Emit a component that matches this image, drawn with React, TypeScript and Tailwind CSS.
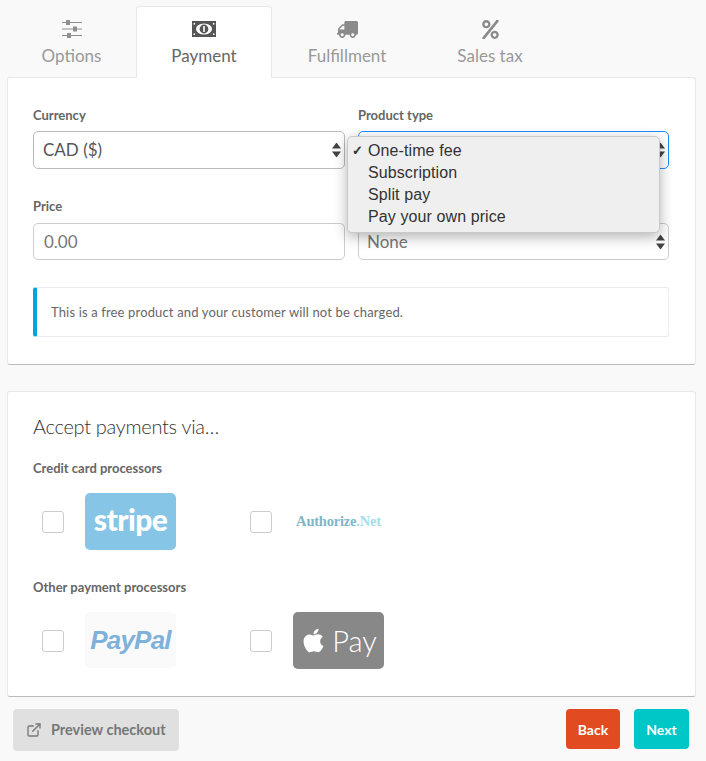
import { FaApple, FaPercent, FaTruck } from "react-icons/fa";
import { FiExternalLink } from "react-icons/fi";

const lato = "font-['Lato','Open_Sans',sans-serif]";

function SlidersIcon() {
  return (
    <svg width="20" height="18" viewBox="0 0 20 18" fill="#8f8f8f">
      <rect x="0" y="2" width="20" height="1" />
      <rect x="4" y="0" width="4" height="5" rx="0.5" />
      <rect x="0" y="8.5" width="20" height="1" />
      <rect x="11" y="6.5" width="4" height="5" rx="0.5" />
      <rect x="0" y="15" width="20" height="1" />
      <rect x="5" y="13" width="4" height="5" rx="0.5" />
    </svg>
  );
}

function BillIcon() {
  return (
    <svg width="24" height="16" viewBox="0 0 24 16">
      <rect width="24" height="16" fill="#555" />
      <ellipse cx="12" cy="8" rx="8" ry="5.6" fill="#fff" />
      <circle cx="12" cy="8" r="4.4" fill="#555" />
      <rect x="11.2" y="5" width="1.6" height="6" fill="#fff" />
      <rect x="1.5" y="2" width="1.6" height="1.6" fill="#fff" />
      <rect x="1.5" y="12.4" width="1.6" height="1.6" fill="#fff" />
      <rect x="20.9" y="2" width="1.6" height="1.6" fill="#fff" />
      <rect x="20.9" y="12.4" width="1.6" height="1.6" fill="#fff" />
    </svg>
  );
}

function SelectArrows() {
  return (
    <svg width="9" height="15" viewBox="0 0 9 15" fill="#444" className="absolute right-[3px] top-1/2 -translate-y-1/2">
      <path d="M4.5 0 L9 6 L0 6 Z" />
      <path d="M4.5 15 L9 9 L0 9 Z" />
    </svg>
  );
}

function Tab({ label, icon, width, active }: { label: string; icon: React.ReactNode; width: string; active?: boolean }) {
  return (
    <div
      className={`flex flex-col items-center ${width} ${
        active
          ? "relative z-10 h-[72px] rounded-t-[4px] border border-b-0 border-[#e8e8e8] bg-white text-[#666]"
          : "h-[71px] text-[#999]"
      }`}
    >
      <div className={`flex h-[20px] items-center ${active ? "mt-[12px]" : "mt-[13px]"}`}>{icon}</div>
      <span className="mt-[5px] text-[17px] leading-[24px]">{label}</span>
    </div>
  );
}

function Field({ label, width, children }: { label: string; width: string; children: React.ReactNode }) {
  return (
    <div className={width}>
      <div className="h-[16px] text-[13px] font-bold leading-[16px] text-[#666]">{label}</div>
      {children}
    </div>
  );
}

function Processor({ children, width }: { children: React.ReactNode; width: string }) {
  return (
    <div className={`flex items-center ${width}`}>
      <div className="ml-[9px] mr-[21px] h-[22px] w-[22px] rounded-[3px] border border-[#ccc] bg-white" />
      {children}
    </div>
  );
}

export default function App() {
  return (
    <div className={`${lato} relative h-[761px] w-[706px] overflow-hidden bg-[#f9f9f9]`}>
      <div className="ml-[7px] flex pt-[6px]">
        <Tab label="Options" width="w-[129px]" icon={<SlidersIcon />} />
        <Tab label="Payment" width="w-[136px]" active icon={<BillIcon />} />
        <Tab label="Fulfillment" width="w-[150px]" icon={<FaTruck size={21} color="#8a8a8a" className="-scale-x-100" />} />
        <Tab label="Sales tax" width="w-[136px]" icon={<FaPercent size={19} color="#8a8a8a" />} />
      </div>

      <div className="relative ml-[7px] -mt-px h-[288px] w-[689px] rounded-[3px] border border-[#e8e8e8] border-b-[#bbb] bg-white pl-[25px] pr-[26px] pt-[29px]">
        <div className="flex justify-between">
          <Field label="Currency" width="w-[312px]">
            <div className="relative mt-[8px] flex h-[38px] items-center rounded-[5px] border border-[#bbb] pl-[9px] text-[17px] text-[#555]">
              CAD ($)
              <SelectArrows />
            </div>
          </Field>
          <Field label="Product type" width="w-[311px]">
            <div className="relative mt-[8px] h-[38px] rounded-[5px] border border-[#1a8cff]">
              <SelectArrows />
            </div>
          </Field>
        </div>
        <div className="mt-[29px] flex justify-between">
          <Field label="Price" width="w-[312px]">
            <div className="mt-[9px] flex h-[37px] items-center rounded-[5px] border border-[#ccc] pl-[10px] text-[17px] text-[#777]">
              0.00
            </div>
          </Field>
          <Field label="" width="w-[311px]">
            <div className="relative mt-[9px] flex h-[37px] items-center rounded-[5px] border border-[#ccc] pl-[8px] text-[17px] text-[#777]">
              None
              <SelectArrows />
            </div>
          </Field>
        </div>
        <div className="mt-[27px] flex h-[50px] items-center rounded-[3px] border border-l-[4px] border-[#ececec] border-l-[#00a6e0] pl-[14px] pt-[1px] text-[13px] tracking-[0.15px] text-[#666]">
          This is a free product and your customer will not be charged.
        </div>
      </div>

      <div className="ml-[7px] mt-[26px] h-[306px] w-[689px] rounded-[3px] border border-[#e8e8e8] border-b-[#bbb] bg-white px-[25px] pt-[20px]">
        <div className="text-[20px] font-light leading-[28px] tracking-[-0.3px] text-[#333]">Accept payments via…</div>
        <div className="mt-[20px] text-[13px] font-bold leading-[16px] text-[#666]">Credit card processors</div>
        <div className="mt-[17px] flex h-[57px]">
          <Processor width="w-[208px]">
            <div className="flex h-[57px] w-[91px] items-center justify-center rounded-[5px] bg-[#86c5e6] pb-[4px] text-[30px] font-black tracking-[-0.6px] text-white">
              stripe
            </div>
          </Processor>
          <Processor width="w-[200px]">
            <div className="flex w-[91px] items-center justify-center whitespace-nowrap font-['Liberation_Serif'] text-[14.5px] font-bold tracking-[-0.2px] text-[#7fb6c4]">
              Authorize<span className="text-[#9fe0ea]">.Net</span>
            </div>
          </Processor>
        </div>
        <div className="mt-[29px] text-[13px] font-bold leading-[16px] text-[#666]">Other payment processors</div>
        <div className="mt-[17px] flex h-[57px]">
          <Processor width="w-[208px]">
            <div className="mb-[1px] flex h-[56px] w-[91px] items-center justify-center rounded-[5px] bg-[#fafafa] font-['Liberation_Sans'] text-[26px] font-bold italic tracking-[-0.8px] text-[#7fb2da]">
              PayPal
            </div>
          </Processor>
          <Processor width="w-[200px]">
            <div className="flex h-[57px] w-[91px] items-center justify-center gap-[5px] rounded-[5px] bg-[#888] text-white">
              <FaApple size={27} />
              <span className="text-[29px] font-light">Pay</span>
            </div>
          </Processor>
        </div>
      </div>

      <div className="flex items-start justify-between pl-[13px] pr-[17px] pt-[12px]">
        <div className="flex h-[42px] w-[166px] items-center rounded-[4px] bg-[#e0e0e0] pl-[13px] text-[14.5px] font-bold text-[#777]">
          <FiExternalLink size={16} className="mr-[9px]" />
          Preview checkout
        </div>
        <div className="flex gap-[14px]">
          <div className="flex h-[40px] w-[54px] items-center justify-center rounded-[4px] bg-[#e24a22] text-[14px] font-bold text-white">Back</div>
          <div className="flex h-[40px] w-[55px] items-center justify-center rounded-[4px] bg-[#00c7c7] text-[14px] font-bold text-white">Next</div>
        </div>
      </div>

      {/* native select popup */}
      <div className="absolute left-[347px] top-[136px] z-20 h-[97px] w-[313px] rounded-[5px] border border-[#c9c9c9] bg-[#efefef] pl-[20px] pt-[3px] font-['Liberation_Sans'] text-[16px] leading-[22px] tracking-[0.1px] text-[#333] shadow-[0_4px_14px_rgba(0,0,0,0.3)]">
        <span className="absolute left-[4px] top-[3px] text-[13px] font-bold">✓</span>
        <div>One-time fee</div>
        <div>Subscription</div>
        <div>Split pay</div>
        <div>Pay your own price</div>
      </div>
    </div>
  );
}
